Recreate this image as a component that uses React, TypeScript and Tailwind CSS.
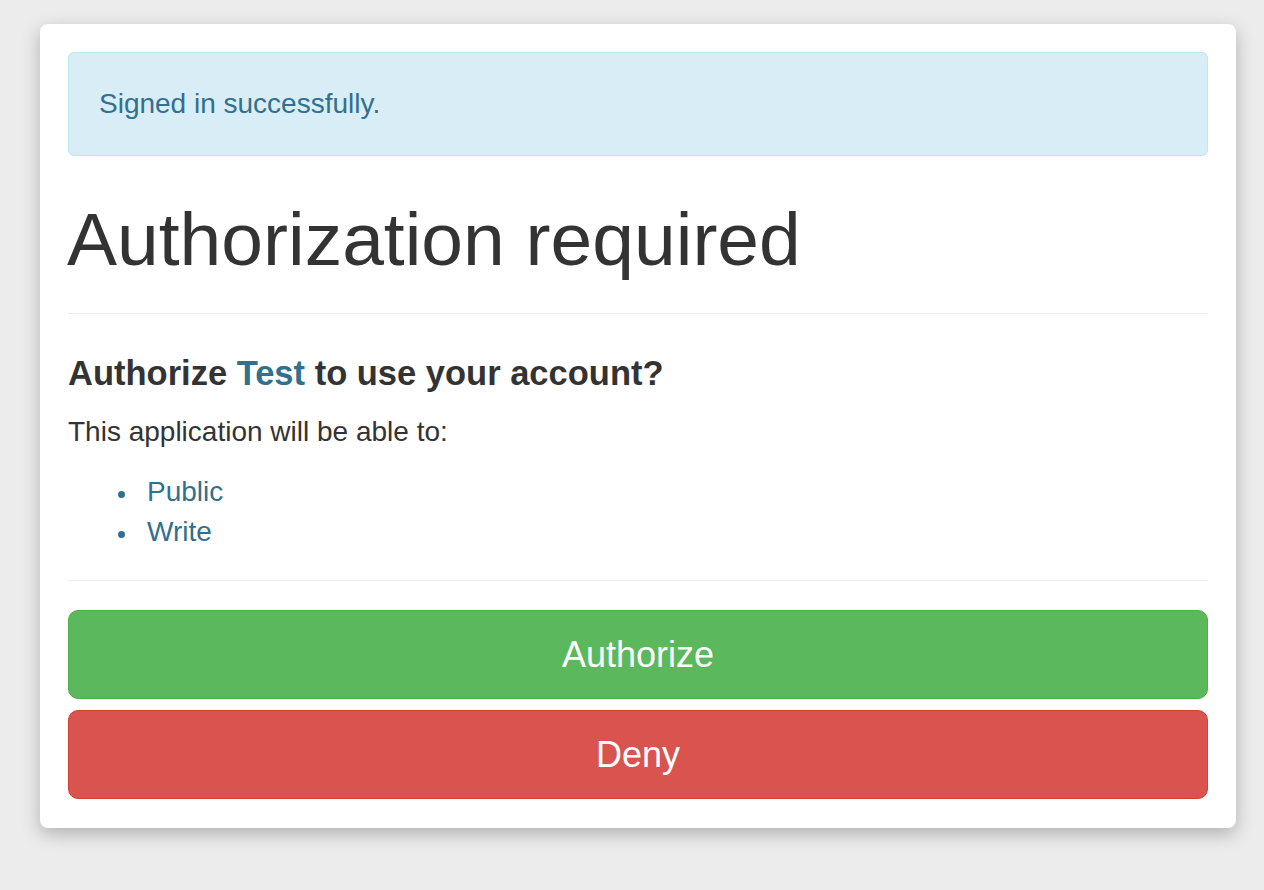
export default function App() {
  const scopes = ["Public", "Write"];

  return (
    <div className="min-h-screen bg-[#ececec] pt-[24px] pb-[60px] font-['Liberation_Sans',Arial,sans-serif] text-[#333333]">
      <div className="ml-[40px] w-[1196px] rounded-[8px] bg-white px-[28px] pt-[28px] pb-[29px] shadow-[0_6px_18px_rgba(0,0,0,0.25)]">
        {/* flash */}
        <div className="flex h-[104px] items-center rounded-[6px] border border-[#bce8f1] bg-[#d9edf7] px-[30px] text-[28px] leading-[40px] text-[#31708f]">
          Signed in successfully.
        </div>

        <h1 className="mt-[43px] -ml-px text-[75px] leading-[80px] font-normal">Authorization required</h1>
        <hr className="mt-[34px] border-t border-[#eeeeee]" />

        <h4 className="mt-[39px] text-[34.5px] leading-[40px] font-bold">
          Authorize <span className="text-[#31708f]">Test</span> to use your account?
        </h4>
        <p className="mt-[19px] text-[28px] leading-[40px]">This application will be able to:</p>
        <ul className="mt-[20px] pl-[50px] text-[28px] leading-[40px] text-[#31708f]">
          {scopes.map((s) => (
            <li key={s} className="flex items-center">
              <span className="mt-[5px] mr-[22px] h-[7px] w-[7px] rounded-full bg-[#31708f]" />
              {s}
            </li>
          ))}
        </ul>
        <hr className="mt-[28px] border-t border-[#eeeeee]" />

        <button className="mt-[29px] flex h-[89px] w-full items-center justify-center rounded-[10px] border border-[#4cae4c] bg-[#5cb85c] text-[36px] text-white">
          Authorize
        </button>
        <button className="mt-[11px] flex h-[89px] w-full items-center justify-center rounded-[10px] border border-[#d43f3a] bg-[#d9534f] text-[36px] text-white">
          Deny
        </button>
      </div>
    </div>
  );
}
